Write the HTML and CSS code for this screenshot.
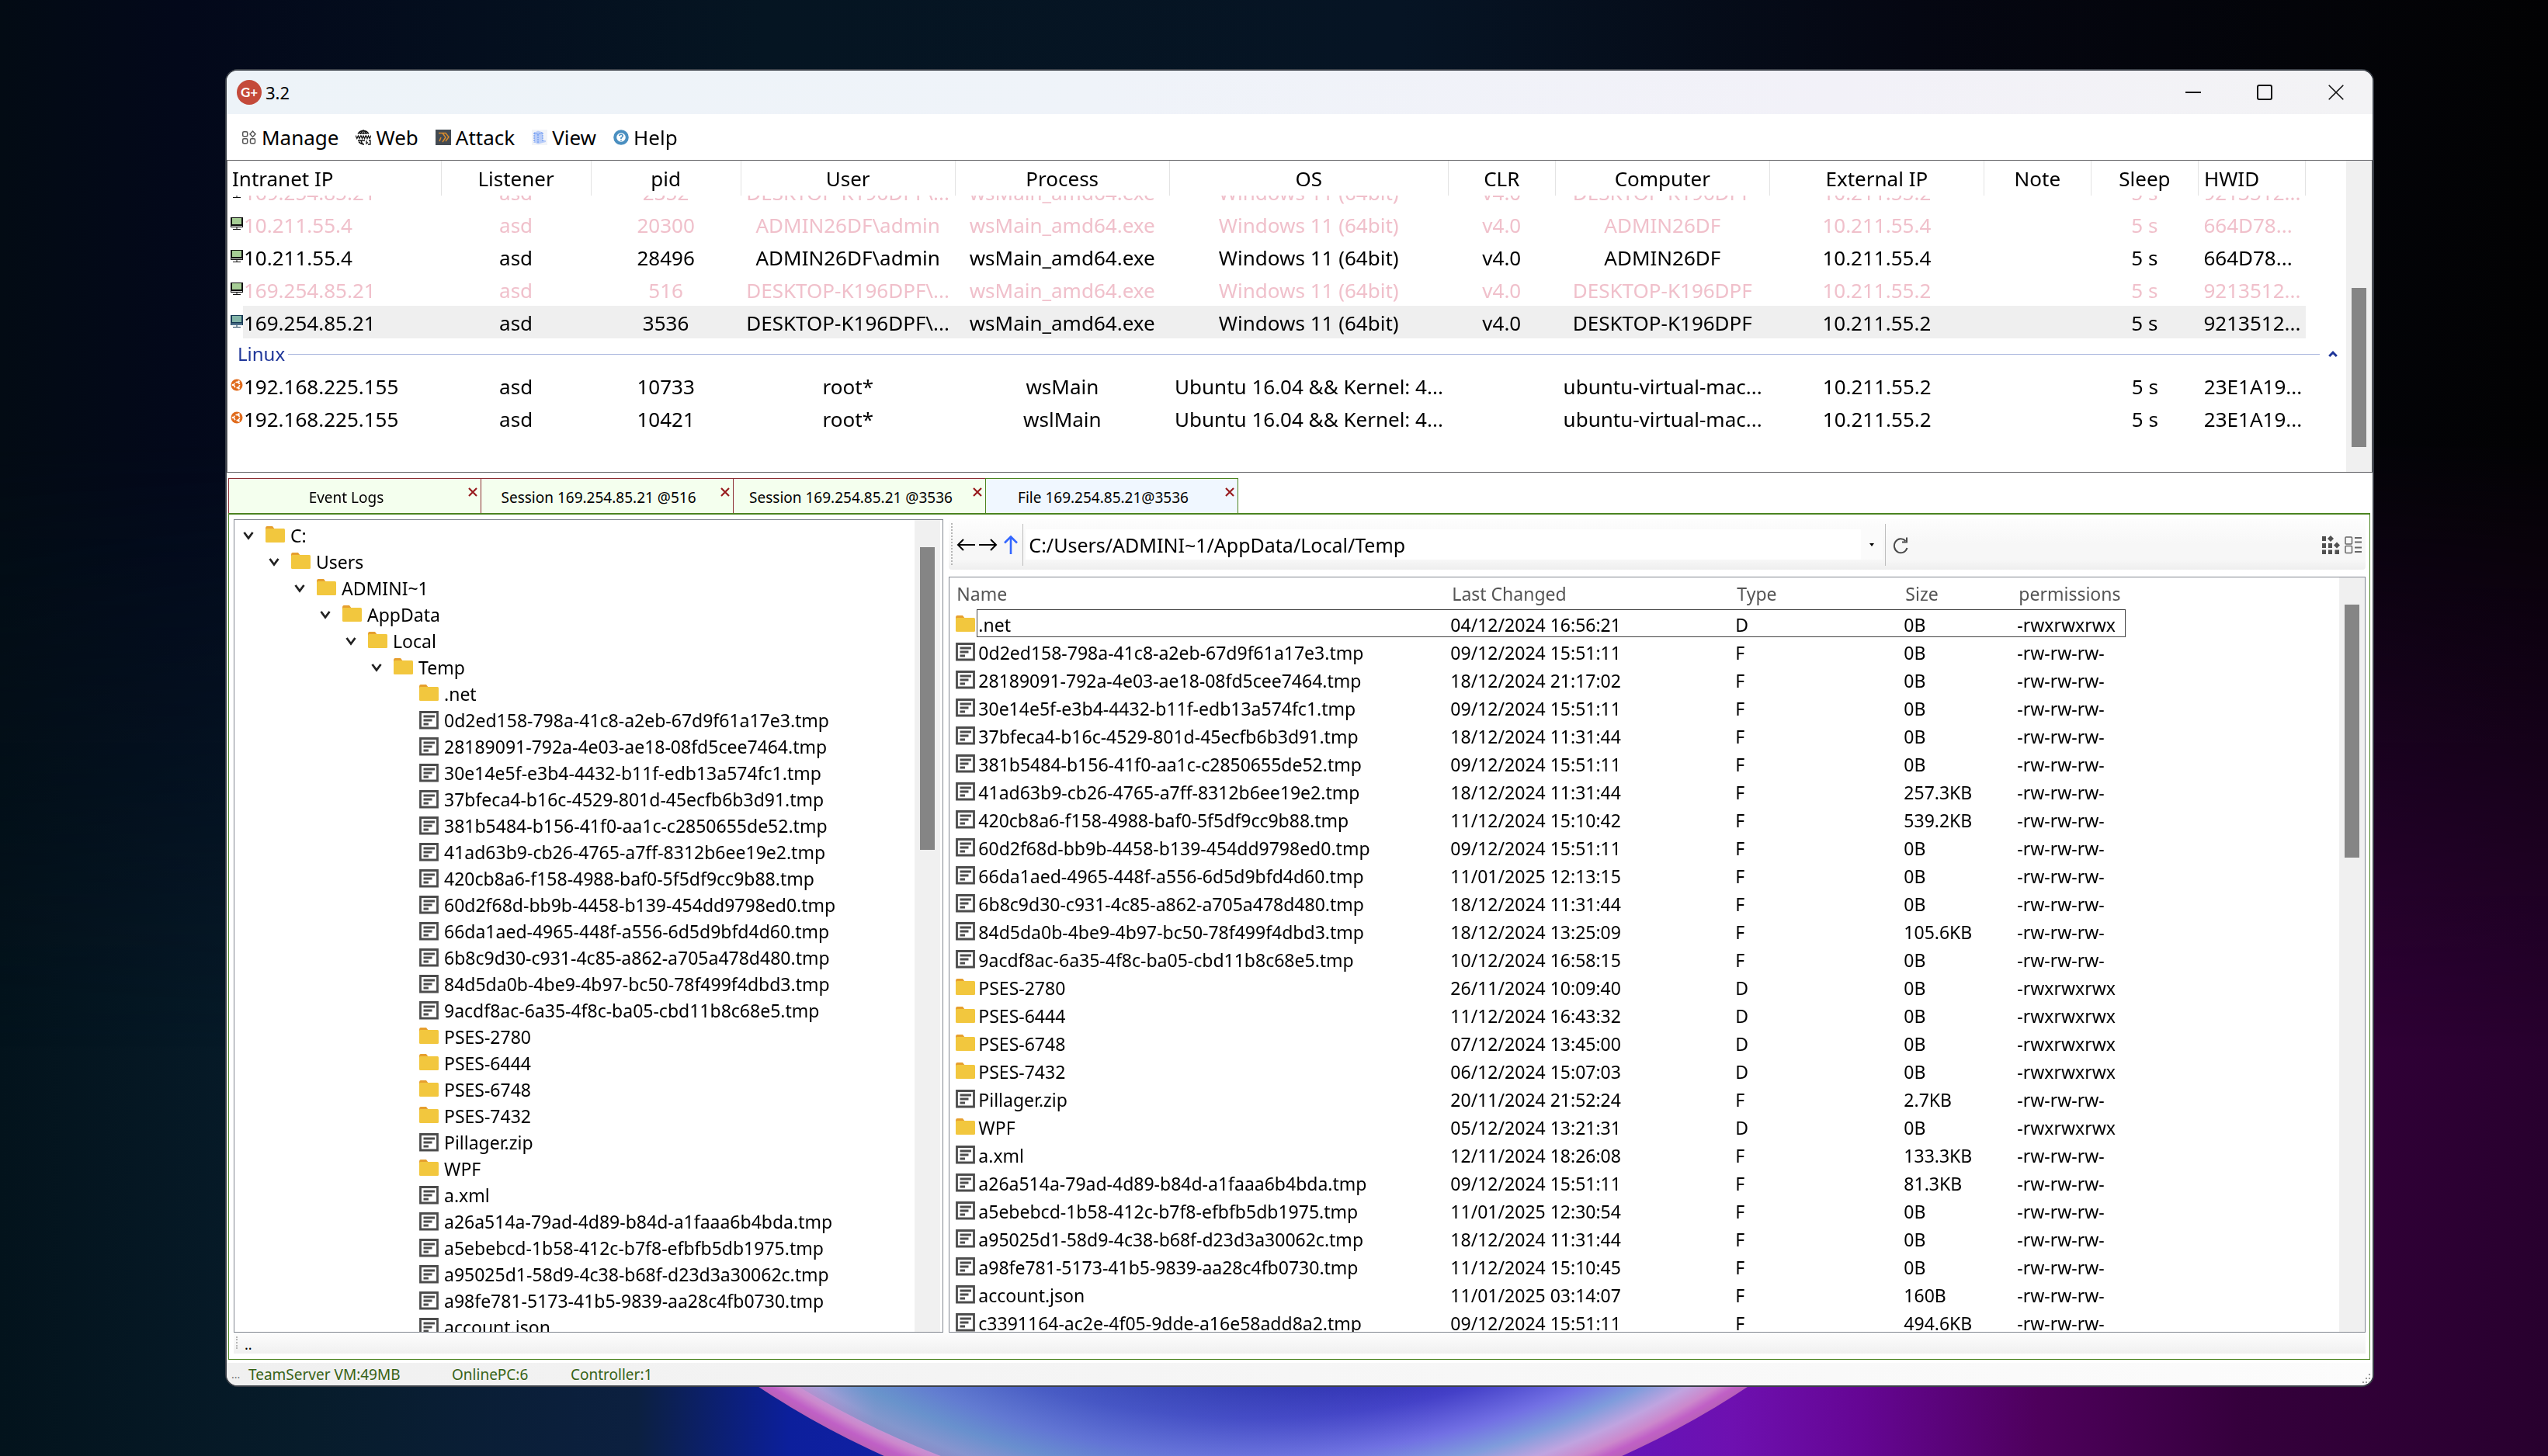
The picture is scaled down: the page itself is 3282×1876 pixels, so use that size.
FILE: index.html
```html
<!DOCTYPE html>
<html lang="en">
<head>
<meta charset="utf-8">
<title>3.2</title>
<link rel="stylesheet" href="styles.css">
</head>
<body>
<svg class="wallpaper" viewBox="0 0 3282 1876" preserveAspectRatio="xMidYMax slice" aria-hidden="true">
  <defs>
    <linearGradient id="night" x1="0" x2="1" y1="0" y2="0">
      <stop offset="0" stop-color="#03131c"/><stop offset=".12" stop-color="#071c2b"/><stop offset=".25" stop-color="#0c2040"/>
      <stop offset=".31" stop-color="#0c1f9c"/><stop offset=".4" stop-color="#1a22b0"/><stop offset=".6" stop-color="#5c18c0"/>
      <stop offset=".68" stop-color="#6e10b0"/><stop offset=".73" stop-color="#650694"/><stop offset=".8" stop-color="#4e005c"/>
      <stop offset=".88" stop-color="#35003c"/><stop offset="1" stop-color="#28002e"/>
    </linearGradient>
    <linearGradient id="top" x1="0" x2="1" y1="0" y2="0">
      <stop offset="0" stop-color="#030b14"/><stop offset=".07" stop-color="#03081a"/><stop offset=".3" stop-color="#051522"/>
      <stop offset=".55" stop-color="#061424"/><stop offset=".75" stop-color="#050712"/><stop offset="1" stop-color="#020203"/>
    </linearGradient>
    <linearGradient id="fade" x1="0" x2="0" y1="0" y2="1">
      <stop offset="0" stop-color="#fff"/><stop offset=".3" stop-color="#fff"/><stop offset=".72" stop-color="#000"/>
    </linearGradient>
    <mask id="fadeMask"><rect width="3282" height="1876" fill="url(#fade)"/></mask>
    <radialGradient id="orb" gradientUnits="userSpaceOnUse" cx="1614" cy="820" r="1158">
      <stop offset=".83" stop-color="#2c2aae"/><stop offset=".87" stop-color="#4440c8"/><stop offset=".912" stop-color="#7270e4"/>
      <stop offset=".94" stop-color="#7f9cdc"/><stop offset=".965" stop-color="#c0a4e0"/><stop offset=".982" stop-color="#cc88cc"/>
      <stop offset=".992" stop-color="#c060c6"/><stop offset="1" stop-color="#b860b8"/>
    </radialGradient>
    <linearGradient id="teal" x1="0" x2="1" y1="0" y2="0">
      <stop offset="0" stop-color="#5a8fc0" stop-opacity="0"/><stop offset=".15" stop-color="#5a8fc0" stop-opacity=".6"/>
      <stop offset=".5" stop-color="#4a78c0" stop-opacity=".4"/><stop offset="1" stop-color="#4a78c0" stop-opacity="0"/>
    </linearGradient>
    <clipPath id="below"><rect y="1700" width="3282" height="176"/></clipPath>
    <clipPath id="inOrb"><circle cx="1614" cy="820" r="1130"/></clipPath>
  </defs>
  <rect width="3282" height="1876" fill="url(#night)"/>
  <rect width="3282" height="1876" fill="url(#top)" mask="url(#fadeMask)"/>
  <g clip-path="url(#below)">
    <circle cx="1614" cy="820" r="1158" fill="url(#orb)"/>
    <rect x="1000" y="1700" width="850" height="176" fill="url(#teal)" clip-path="url(#inOrb)"/>
  </g>
</svg>

<svg class="sprite" aria-hidden="true">
  <symbol id="i-close" viewBox="0 0 20 20"><path d="M.7.7 19.3 19.3M19.3.7.7 19.3" fill="none" stroke="#111" stroke-width="1.6"/></symbol>
  <symbol id="i-x" viewBox="0 0 12 12"><path d="M1 1 11 11M11 1 1 11" fill="none" stroke="#981b1e" stroke-width="2.2"/></symbol>
  <symbol id="i-chev" viewBox="0 0 14 14"><path d="M1.5 3 7 10.5 12.5 3" fill="none" stroke="#222" stroke-width="2.8"/></symbol>
</svg>

<main class="window">
  <header class="titlebar">
    <span class="logo">G+</span>
    <h1 class="title">3.2</h1>
    <button class="win-btn" aria-label="Minimize"><svg viewBox="0 0 20 20"><path d="M0 10H20" stroke="#111" stroke-width="2"/></svg></button>
    <button class="win-btn" aria-label="Maximize"><svg viewBox="0 0 20 20"><rect x="1" y="1" width="18" height="18" rx="2" fill="none" stroke="#111" stroke-width="2"/></svg></button>
    <button class="win-btn" aria-label="Close"><svg><use href="#i-close"/></svg></button>
  </header>

  <nav class="menubar">
    <button class="menu"><svg viewBox="0 0 20 20"><g fill="none" stroke="#555" stroke-width="1.5"><rect x="1.7" y="2.7" width="6" height="6" rx="1.5"/><path d="M14.5 2 18 5.7 14.5 9.4 11 5.7z"/><rect x="1.7" y="11.7" width="6" height="6" rx="1.5"/><rect x="11.5" y="11.7" width="6" height="6" rx="1.5"/></g></svg>Manage</button>
    <button class="menu"><svg viewBox="0 0 20 20"><g fill="none" stroke="#111" stroke-width="1.3"><path d="M3 5.5A8 8 0 0 1 17 5.5M3.5 4.5H16.5M10 .5V6M6.5 6Q7 2 10 .8 13 2 13.500 6"/><path d="M0 7.5 1.8 11.5 3.4 8 5 11.5 6.7 7.5M7 7.5 8.5 11.5 10 8 11.6 11.5 13.2 7.5M13.5 7.5 15 11.5 16.6 8 18.2 11.5 20 7.5"/><path d="M3 14H12M4 15.5Q7 19 11 19M7 14Q8 18 10 19M14 14V18L16 16.5M17 14H19V19H16"/></g></svg>Web</button>
    <button class="menu"><svg viewBox="0 0 20 20"><rect width="20" height="20" fill="#434a52"/><path d="M4 4.5H9L13 10 9 16M8.5 4.5H13L17 9.5 13 15M7 10 5 15" fill="none" stroke="#d98b2b" stroke-width="1.5"/></svg>Attack</button>
    <button class="menu"><svg viewBox="0 0 20 20"><rect width="20" height="20" fill="#f2f4f8"/><path d="M3 4 8 1.5 14 3.5V13L18 14V16L8 18.5 3 16.5z" fill="#b9cdf8"/><path d="M3 4 8 6 14 3.5M8 6V18M3 4V16.5M14 4V16" fill="none" stroke="#5b8def" stroke-dasharray="2 1"/></svg>View</button>
    <button class="menu"><svg viewBox="0 0 20 20"><circle cx="10" cy="10" r="7.8" fill="#fff" stroke="#4a8fc0" stroke-width="4"/><path d="M7.800 8.2Q8 6.2 10 6.2T12.2 8.2Q12.2 9.4 10 10.4V12M10 13V14.5" fill="none" stroke="#4a8fc0" stroke-width="1.6"/></svg>Help</button>
  </nav>

  <section class="sessions">
    <table class="hosts">
      <colgroup><col class="w-ip"><col class="w-lis"><col class="w-lis"><col class="w-l"><col class="w-l"><col class="w-os"><col class="w-s"><col class="w-l"><col class="w-l"><col class="w-s"><col class="w-s"><col class="w-s"></colgroup>
      <thead><tr><th>Intranet IP</th><th>Listener</th><th>pid</th><th>User</th><th>Process</th><th>OS</th><th>CLR</th><th>Computer</th><th>External IP</th><th>Note</th><th>Sleep</th><th>HWID</th></tr></thead>
      <tbody>
        <tr class="off peek"><td class="win"><span>169.254.85.21</span></td><td><span>asd</span></td><td><span>2352</span></td><td><span>DESKTOP-K196DPF\...</span></td><td><span>wsMain_amd64.exe</span></td><td><span>Windows 11 (64bit)</span></td><td><span>v4.0</span></td><td><span>DESKTOP-K196DPF</span></td><td><span>10.211.55.2</span></td><td></td><td><span>5 s</span></td><td><span>9213512...</span></td></tr>
        <tr class="off"><td class="win">10.211.55.4</td><td>asd</td><td>20300</td><td>ADMIN26DF\admin</td><td>wsMain_amd64.exe</td><td>Windows 11 (64bit)</td><td>v4.0</td><td>ADMIN26DF</td><td>10.211.55.4</td><td></td><td>5 s</td><td>664D78...</td></tr>
        <tr><td class="win">10.211.55.4</td><td>asd</td><td>28496</td><td>ADMIN26DF\admin</td><td>wsMain_amd64.exe</td><td>Windows 11 (64bit)</td><td>v4.0</td><td>ADMIN26DF</td><td>10.211.55.4</td><td></td><td>5 s</td><td>664D78...</td></tr>
        <tr class="off"><td class="win">169.254.85.21</td><td>asd</td><td>516</td><td>DESKTOP-K196DPF\...</td><td>wsMain_amd64.exe</td><td>Windows 11 (64bit)</td><td>v4.0</td><td>DESKTOP-K196DPF</td><td>10.211.55.2</td><td></td><td>5 s</td><td>9213512...</td></tr>
        <tr class="sel"><td class="win">169.254.85.21</td><td>asd</td><td>3536</td><td>DESKTOP-K196DPF\...</td><td>wsMain_amd64.exe</td><td>Windows 11 (64bit)</td><td>v4.0</td><td>DESKTOP-K196DPF</td><td>10.211.55.2</td><td></td><td>5 s</td><td>9213512...</td></tr>
      </tbody>
    </table>
    <div class="group"><h2>Linux</h2><hr><button class="fold" aria-label="Collapse Linux"><svg viewBox="0 0 12 10"><path d="M1.2 8 6 3.2 10.8 8" fill="none" stroke="#1f3699" stroke-width="3"/></svg></button></div>
    <table class="hosts">
      <colgroup><col class="w-ip"><col class="w-lis"><col class="w-lis"><col class="w-l"><col class="w-l"><col class="w-os"><col class="w-s"><col class="w-l"><col class="w-l"><col class="w-s"><col class="w-s"><col class="w-s"></colgroup>
      <tbody>
        <tr><td class="nix">192.168.225.155</td><td>asd</td><td>10733</td><td>root*</td><td>wsMain</td><td>Ubuntu 16.04 &amp;&amp; Kernel: 4...</td><td></td><td>ubuntu-virtual-mac...</td><td>10.211.55.2</td><td></td><td>5 s</td><td>23E1A19...</td></tr>
        <tr><td class="nix">192.168.225.155</td><td>asd</td><td>10421</td><td>root*</td><td>wslMain</td><td>Ubuntu 16.04 &amp;&amp; Kernel: 4...</td><td></td><td>ubuntu-virtual-mac...</td><td>10.211.55.2</td><td></td><td>5 s</td><td>23E1A19...</td></tr>
      </tbody>
    </table>
    <div class="scroll"><i class="thumb thumb-top"></i></div>
  </section>

  <nav class="tabs">
    <div class="tab"><button class="tab-name">Event Logs</button><button class="tab-x" aria-label="Close tab"><svg><use href="#i-x"/></svg></button></div>
    <div class="tab"><button class="tab-name">Session 169.254.85.21 @516</button><button class="tab-x" aria-label="Close tab"><svg><use href="#i-x"/></svg></button></div>
    <div class="tab"><button class="tab-name">Session 169.254.85.21 @3536</button><button class="tab-x" aria-label="Close tab"><svg><use href="#i-x"/></svg></button></div>
    <div class="tab on"><button class="tab-name">File 169.254.85.21@3536</button><button class="tab-x" aria-label="Close tab"><svg><use href="#i-x"/></svg></button></div>
  </nav>

  <section class="page">
    <div class="split">
      <div class="tree">
        <ul>
          <li><p class="node dir"><button aria-label="Collapse"><svg><use href="#i-chev"/></svg></button>C:</p><ul>
          <li><p class="node dir"><button aria-label="Collapse"><svg><use href="#i-chev"/></svg></button>Users</p><ul>
          <li><p class="node dir"><button aria-label="Collapse"><svg><use href="#i-chev"/></svg></button>ADMINI~1</p><ul>
          <li><p class="node dir"><button aria-label="Collapse"><svg><use href="#i-chev"/></svg></button>AppData</p><ul>
          <li><p class="node dir"><button aria-label="Collapse"><svg><use href="#i-chev"/></svg></button>Local</p><ul>
          <li><p class="node dir"><button aria-label="Collapse"><svg><use href="#i-chev"/></svg></button>Temp</p><ul>
            <li class="node dir">.net</li>
            <li class="node file">0d2ed158-798a-41c8-a2eb-67d9f61a17e3.tmp</li>
            <li class="node file">28189091-792a-4e03-ae18-08fd5cee7464.tmp</li>
            <li class="node file">30e14e5f-e3b4-4432-b11f-edb13a574fc1.tmp</li>
            <li class="node file">37bfeca4-b16c-4529-801d-45ecfb6b3d91.tmp</li>
            <li class="node file">381b5484-b156-41f0-aa1c-c2850655de52.tmp</li>
            <li class="node file">41ad63b9-cb26-4765-a7ff-8312b6ee19e2.tmp</li>
            <li class="node file">420cb8a6-f158-4988-baf0-5f5df9cc9b88.tmp</li>
            <li class="node file">60d2f68d-bb9b-4458-b139-454dd9798ed0.tmp</li>
            <li class="node file">66da1aed-4965-448f-a556-6d5d9bfd4d60.tmp</li>
            <li class="node file">6b8c9d30-c931-4c85-a862-a705a478d480.tmp</li>
            <li class="node file">84d5da0b-4be9-4b97-bc50-78f499f4dbd3.tmp</li>
            <li class="node file">9acdf8ac-6a35-4f8c-ba05-cbd11b8c68e5.tmp</li>
            <li class="node dir">PSES-2780</li>
            <li class="node dir">PSES-6444</li>
            <li class="node dir">PSES-6748</li>
            <li class="node dir">PSES-7432</li>
            <li class="node file">Pillager.zip</li>
            <li class="node dir">WPF</li>
            <li class="node file">a.xml</li>
            <li class="node file">a26a514a-79ad-4d89-b84d-a1faaa6b4bda.tmp</li>
            <li class="node file">a5ebebcd-1b58-412c-b7f8-efbfb5db1975.tmp</li>
            <li class="node file">a95025d1-58d9-4c38-b68f-d23d3a30062c.tmp</li>
            <li class="node file">a98fe781-5173-41b5-9839-aa28c4fb0730.tmp</li>
            <li class="node file">account.json</li>
          </ul></li></ul></li></ul></li></ul></li></ul></li></ul></li>
        </ul>
        <div class="scroll"><i class="thumb thumb-tree"></i></div>
      </div>

      <div class="browser">
        <div class="toolbar">
          <i class="grip"></i>
          <button class="tool" aria-label="Back"><svg viewBox="0 0 24 24"><path d="M24 12H2M9 5 2 12 9 19" fill="none" stroke="#000" stroke-width="2"/></svg></button>
          <button class="tool" aria-label="Forward"><svg viewBox="0 0 24 24"><path d="M0 12H22M15 5 22 12 15 19" fill="none" stroke="#000" stroke-width="2"/></svg></button>
          <button class="tool" aria-label="Up"><svg viewBox="0 0 24 24"><path d="M12 24V2M4 9.5 12 1.5 20 9.5" fill="none" stroke="#3366ff" stroke-width="2.6"/></svg></button>
          <i class="rule"></i>
          <input class="path" type="text" aria-label="Path" value="C:/Users/ADMINI~1/AppData/Local/Temp">
          <button class="drop" aria-label="Recent paths"><svg viewBox="0 0 6 4"><path d="M0 0H6L3 4z"/></svg></button>
          <i class="rule"></i>
          <button class="tool" aria-label="Refresh"><svg viewBox="0 0 24 24"><path d="M17.5 7A8.5 9 0 1 0 19.5 16M19 2.5V8.5H13" fill="none" stroke="#4a4a4a" stroke-width="2"/></svg></button>
          <span class="space"></span>
          <button class="tool" aria-label="Icon view"><svg viewBox="0 0 24 24"><path d="M1 1H6V7H1zM1 10H6V16H1zM9 10H14V16H9zM1 18.5H6V24H1zM9 18.5H14V24H9zM17.5 18.5H23V24H17.5zM12 0 16 4 12 8 8 4zM20 8.5 24 12.5 20 16.5 16 12.5z" fill="#505050"/></svg></button>
          <button class="tool" aria-label="Details view"><svg viewBox="0 0 24 24"><g fill="none" stroke="#666" stroke-width="1.5"><rect x="2" y="2" width="8.5" height="9" rx="1"/><rect x="2" y="13.5" width="8.5" height="9" rx="1"/><path d="M14 3H23M14 8.5H23M14 15.5H23M14 21H23" stroke-width="2"/></g></svg></button>
        </div>

        <div class="listing">
          <table class="files">
            <colgroup><col class="f-name"><col class="f-date"><col class="f-type"><col class="f-size"><col class="f-perm"></colgroup>
            <thead><tr><th>Name</th><th>Last Changed</th><th>Type</th><th>Size</th><th>permissions</th></tr></thead>
            <tbody>
              <tr class="focus"><td class="dir">.net</td><td>04/12/2024 16:56:21</td><td>D</td><td>0B</td><td>-rwxrwxrwx</td></tr>
              <tr><td class="file">0d2ed158-798a-41c8-a2eb-67d9f61a17e3.tmp</td><td>09/12/2024 15:51:11</td><td>F</td><td>0B</td><td>-rw-rw-rw-</td></tr>
              <tr><td class="file">28189091-792a-4e03-ae18-08fd5cee7464.tmp</td><td>18/12/2024 21:17:02</td><td>F</td><td>0B</td><td>-rw-rw-rw-</td></tr>
              <tr><td class="file">30e14e5f-e3b4-4432-b11f-edb13a574fc1.tmp</td><td>09/12/2024 15:51:11</td><td>F</td><td>0B</td><td>-rw-rw-rw-</td></tr>
              <tr><td class="file">37bfeca4-b16c-4529-801d-45ecfb6b3d91.tmp</td><td>18/12/2024 11:31:44</td><td>F</td><td>0B</td><td>-rw-rw-rw-</td></tr>
              <tr><td class="file">381b5484-b156-41f0-aa1c-c2850655de52.tmp</td><td>09/12/2024 15:51:11</td><td>F</td><td>0B</td><td>-rw-rw-rw-</td></tr>
              <tr><td class="file">41ad63b9-cb26-4765-a7ff-8312b6ee19e2.tmp</td><td>18/12/2024 11:31:44</td><td>F</td><td>257.3KB</td><td>-rw-rw-rw-</td></tr>
              <tr><td class="file">420cb8a6-f158-4988-baf0-5f5df9cc9b88.tmp</td><td>11/12/2024 15:10:42</td><td>F</td><td>539.2KB</td><td>-rw-rw-rw-</td></tr>
              <tr><td class="file">60d2f68d-bb9b-4458-b139-454dd9798ed0.tmp</td><td>09/12/2024 15:51:11</td><td>F</td><td>0B</td><td>-rw-rw-rw-</td></tr>
              <tr><td class="file">66da1aed-4965-448f-a556-6d5d9bfd4d60.tmp</td><td>11/01/2025 12:13:15</td><td>F</td><td>0B</td><td>-rw-rw-rw-</td></tr>
              <tr><td class="file">6b8c9d30-c931-4c85-a862-a705a478d480.tmp</td><td>18/12/2024 11:31:44</td><td>F</td><td>0B</td><td>-rw-rw-rw-</td></tr>
              <tr><td class="file">84d5da0b-4be9-4b97-bc50-78f499f4dbd3.tmp</td><td>18/12/2024 13:25:09</td><td>F</td><td>105.6KB</td><td>-rw-rw-rw-</td></tr>
              <tr><td class="file">9acdf8ac-6a35-4f8c-ba05-cbd11b8c68e5.tmp</td><td>10/12/2024 16:58:15</td><td>F</td><td>0B</td><td>-rw-rw-rw-</td></tr>
              <tr><td class="dir">PSES-2780</td><td>26/11/2024 10:09:40</td><td>D</td><td>0B</td><td>-rwxrwxrwx</td></tr>
              <tr><td class="dir">PSES-6444</td><td>11/12/2024 16:43:32</td><td>D</td><td>0B</td><td>-rwxrwxrwx</td></tr>
              <tr><td class="dir">PSES-6748</td><td>07/12/2024 13:45:00</td><td>D</td><td>0B</td><td>-rwxrwxrwx</td></tr>
              <tr><td class="dir">PSES-7432</td><td>06/12/2024 15:07:03</td><td>D</td><td>0B</td><td>-rwxrwxrwx</td></tr>
              <tr><td class="file">Pillager.zip</td><td>20/11/2024 21:52:24</td><td>F</td><td>2.7KB</td><td>-rw-rw-rw-</td></tr>
              <tr><td class="dir">WPF</td><td>05/12/2024 13:21:31</td><td>D</td><td>0B</td><td>-rwxrwxrwx</td></tr>
              <tr><td class="file">a.xml</td><td>12/11/2024 18:26:08</td><td>F</td><td>133.3KB</td><td>-rw-rw-rw-</td></tr>
              <tr><td class="file">a26a514a-79ad-4d89-b84d-a1faaa6b4bda.tmp</td><td>09/12/2024 15:51:11</td><td>F</td><td>81.3KB</td><td>-rw-rw-rw-</td></tr>
              <tr><td class="file">a5ebebcd-1b58-412c-b7f8-efbfb5db1975.tmp</td><td>11/01/2025 12:30:54</td><td>F</td><td>0B</td><td>-rw-rw-rw-</td></tr>
              <tr><td class="file">a95025d1-58d9-4c38-b68f-d23d3a30062c.tmp</td><td>18/12/2024 11:31:44</td><td>F</td><td>0B</td><td>-rw-rw-rw-</td></tr>
              <tr><td class="file">a98fe781-5173-41b5-9839-aa28c4fb0730.tmp</td><td>11/12/2024 15:10:45</td><td>F</td><td>0B</td><td>-rw-rw-rw-</td></tr>
              <tr><td class="file">account.json</td><td>11/01/2025 03:14:07</td><td>F</td><td>160B</td><td>-rw-rw-rw-</td></tr>
              <tr><td class="file">c3391164-ac2e-4f05-9dde-a16e58add8a2.tmp</td><td>09/12/2024 15:51:11</td><td>F</td><td>494.6KB</td><td>-rw-rw-rw-</td></tr>
            </tbody>
          </table>
          <div class="scroll"><i class="thumb thumb-files"></i></div>
        </div>
      </div>
    </div>
    <div class="strip"><i class="grip"></i><span>..</span></div>
  </section>

  <footer class="status">
    <span class="dots">...</span><span class="st-a">TeamServer VM:49MB</span><span class="st-b">OnlinePC:6</span><span>Controller:1</span>
    <svg class="resize" viewBox="0 0 10 12"><path d="M8 0h2v2h-2zM4 5h2v2h-2zM8 5h2v2h-2zM0 10h2v2h-2zM4 10h2v2h-2zM8 10h2v2h-2z" fill="#999"/></svg>
  </footer>
</main>
</body>
</html>
```
FILE: styles.css
```css
:root {
  --green: #4b8420;
  --line: #828790;
  --folder: url("data:image/svg+xml,%3Csvg xmlns='http://www.w3.org/2000/svg' viewBox='0 0 26 24'%3E%3Cpath d='M0 4Q0 1 2 1H9L12 5V12H0z' fill='%23e69f2e'/%3E%3Crect y='4' width='25' height='18' rx='1.5' fill='%23f2c73e'/%3E%3C/svg%3E");
  --doc: url("data:image/svg+xml,%3Csvg xmlns='http://www.w3.org/2000/svg' viewBox='0 0 26 24'%3E%3Cpath d='M1.5 1.500H23.5V22H1.500z' fill='%23fff' stroke='%234c4c4c' stroke-width='2.8'/%3E%3Cpath d='M5.500 7H20M5.500 12H16.500M5.500 17H12' stroke='%234c4c4c' stroke-width='2.800'/%3E%3C/svg%3E");
  --pc: url("data:image/svg+xml,%3Csvg xmlns='http://www.w3.org/2000/svg' viewBox='0 0 16 16'%3E%3Cpath d='M0 0H16V13H0z' fill='%23111'/%3E%3Cpath d='M2 1H14V9H2z' fill='%23a6cd95'/%3E%3Cpath d='M1 11H15V12H1z' fill='%23ddd'/%3E%3Cpath d='M8 13V15M3 15.500H13' stroke='%23111'/%3E%3C/svg%3E");
  --pc-sel: url("data:image/svg+xml,%3Csvg xmlns='http://www.w3.org/2000/svg' viewBox='0 0 16 16'%3E%3Cpath d='M0 0H16V13H0z' fill='%23173a55'/%3E%3Cpath d='M2 1H14V9H2z' fill='%2383b5a8'/%3E%3Cpath d='M1 11H15V12H1z' fill='%23a8c8e0'/%3E%3Cpath d='M8 13V15M3 15.500H13' stroke='%23173a55'/%3E%3C/svg%3E");
  --ubuntu: url("data:image/svg+xml,%3Csvg xmlns='http://www.w3.org/2000/svg' viewBox='0 0 16 16'%3E%3Ccircle cx='8' cy='8' r='7.500' fill='%23e06a1b'/%3E%3Ccircle cx='8' cy='8' r='3.600' fill='none' stroke='%23fff' stroke-width='1.600' stroke-dasharray='6 1.500'/%3E%3Ccircle cx='3' cy='8' r='1.300' fill='%23fff'/%3E%3Ccircle cx='10.500' cy='3.600' r='1.300' fill='%23fff'/%3E%3Ccircle cx='10.500' cy='12.400' r='1.300' fill='%23fff'/%3E%3C/svg%3E");
}

* { box-sizing: border-box; }

body {
  margin: 0;
  height: 100vh;
  padding: 89px 224px 89px 290px;
  background: #03131c;
  color: #000;
  font: 23px/34px "Noto Sans", "Open Sans", sans-serif;
  overflow: hidden;
}

button, input { font: inherit; color: inherit; border: 0; padding: 0; background: none; }
button { display: flex; align-items: center; justify-content: center; }
h1, h2, p, ul { margin: 0; padding: 0; font-weight: 400; }
ul { list-style: none; }

.wallpaper { position: fixed; inset: 0; width: 100%; height: 100%; z-index: -1; }
.sprite { display: none; }

.window {
  display: flex;
  flex-direction: column;
  height: 100%;
  border: 2px solid #3b4048;
  border-radius: 16px;
  background: #fff;
  overflow: hidden;
}

.titlebar {
  display: flex;
  align-items: center;
  flex: none;
  height: 56px;
  padding: 0 24px 0 13px;
  background: linear-gradient(90deg, #edf3f8, #eff3f9 40%, #f2f1f8 75%, #f3f3f5);
}
.logo {
  width: 32px;
  height: 32px;
  margin-right: 5px;
  border-radius: 50%;
  background: #c44a3a;
  color: #fff;
  font: 700 17px/32px Lato, sans-serif;
  text-align: center;
}
.title { margin-right: auto; font-size: 22px; }
.win-btn { width: 92px; height: 56px; }
.win-btn:last-child { width: 46px; margin-left: 23px; }
.win-btn svg { width: 20px; height: 20px; }

.menubar {
  display: flex;
  align-items: center;
  gap: 22px;
  flex: none;
  height: 59px;
  padding-left: 19px;
  font-size: 26px;
}
.menu { gap: 6px; }
.menu svg { width: 20px; height: 20px; }

.sessions {
  position: relative;
  flex: none;
  height: 403px;
  border: 1px solid #5f5f63;
  overflow: hidden;
  font-size: 26px;
}
.hosts { table-layout: fixed; width: 2677px; border-collapse: collapse; line-height: 40px; }
.w-ip { width: 275px; }
.w-lis { width: 193px; }
.w-l { width: 276px; }
.w-os { width: 359px; }
.w-s { width: 138px; }
.hosts th, .hosts td { padding: 0; font-weight: 400; text-align: center; white-space: nowrap; }
.hosts td { padding-top: 2px; }
.hosts th { height: 45px; padding-top: 2px; line-height: 43px; border-right: 1px solid #e3e3e3; }
.hosts th:first-child { padding-left: 6px; text-align: left; }
.hosts td:first-child { padding-left: 21px; text-align: left; }
.hosts th:last-child, .hosts td:last-child { padding-left: 7px; text-align: left; }
.win { background: var(--pc) 4px 12px / 16px 16px no-repeat; }
.nix { background: var(--ubuntu) 4px 12px / 16px 16px no-repeat; }
.off { color: #f0c0cb; }
.hosts .peek td { padding-top: 0; }
.peek span { display: flex; align-items: flex-end; justify-content: center; height: 16px; overflow: hidden; }
.peek td:first-child span, .peek td:last-child span { justify-content: flex-start; }
.peek .win { background-position: 4px -13px; }
.sel td { background-color: #efefef; }
.sel .win { background: var(--pc-sel) 4px 12px / 16px 16px no-repeat, linear-gradient(#efefef, #efefef) 20px 0 no-repeat; }
.group { display: flex; align-items: center; height: 40px; padding: 0 44px 0 13px; }
.group h2 { font-size: 24px; color: #1f3699; }
.group hr { flex: 1; height: 1px; margin: 0 11px 0 4px; border: 0; background: #a9b5dd; }
.fold svg { width: 12px; height: 10px; }

.scroll { position: absolute; top: 0; right: 0; bottom: 0; width: 33px; background: #f0f0f0; }
.thumb { position: absolute; left: 7px; width: 19px; background: #858585; }
.thumb-top { top: 41%; height: 51%; }
.thumb-tree { top: 35px; height: 390px; }
.thumb-files { top: 35px; height: 326px; }

.tabs { display: flex; flex: none; margin-top: 7px; padding-left: 2px; }
.tab {
  display: flex;
  width: 325px;
  height: 45px;
  padding: 11px 4px 0 0;
  border: 1px solid #8c2f33;
  border-width: 1px 0 0 1px;
  background: #f4ffee;
  font-size: 19px;
}
.tab-name { flex: 1; height: 26px; padding-right: 6px; }
.tab-x { width: 12px; height: 12px; }
.tab-x svg { width: 12px; height: 12px; }
.tab.on { width: 326px; border-color: var(--green); border-right-width: 1px; background: #f0f7ff; }

.page {
  display: flex;
  flex-direction: column;
  flex: 1;
  min-height: 0;
  margin: 0 3px 4px 2px;
  padding: 6px 5px 7px 6px;
  border: 1px solid var(--green);
  border-top-width: 2px;
}
.split { display: flex; flex: 1; gap: 7px; min-height: 0; }

.tree { position: relative; flex: 1 1 0; border: 1px solid var(--line); padding: 3px 0 0; overflow: hidden; }
.tree ul ul { margin-left: 33px; }
.tree .scroll { right: 3px; }
.node { display: flex; height: 34px; padding-left: 72px; white-space: nowrap; }
.node button { width: 14px; margin: 0 47px 0 -61px; }
.node svg { width: 14px; height: 14px; }
.dir { background: var(--folder) 40px 4px / 26px 24px no-repeat; }
.file { background: var(--doc) 40px 5px / 26px 24px no-repeat; }

.browser { display: flex; flex-direction: column; flex: 2 1 0; gap: 9px; min-height: 0; }
.toolbar {
  display: flex;
  align-items: center;
  flex: none;
  height: 65px;
  padding: 0 4px 0 3px;
  border-radius: 4px;
  background: linear-gradient(#fdfdfd, #f7f7f7 50%, #f7f7f7 80%, #eee);
}
.grip { align-self: stretch; margin: 5px 0 6px; border-left: 2px dotted #b5b5b5; }
.tool { flex: none; width: 24px; height: 24px; margin-left: 5px; }
.tool svg { width: 24px; height: 24px; }
.rule { width: 1px; height: 54px; margin: 0 3px; background: #bdbdbd; }
.path { flex: 0 1 1076px; min-width: 0; height: 39px; padding: 0 4px; background: #fff; font-size: 25px; }
.drop { width: 28px; height: 39px; background: #fbfbfb; }
.drop svg { width: 6px; height: 4px; }
.space { flex: 1; }

.listing { position: relative; flex: 1; min-height: 0; border: 1px solid var(--line); overflow: hidden; }
.files { table-layout: fixed; width: 1515px; border-collapse: collapse; line-height: 32px; }
.f-name { width: 641px; }
.f-date { width: 367px; }
.f-type { width: 217px; }
.f-size { width: 146px; }
.f-perm { width: 144px; }
.files th { height: 41px; padding: 0 0 0 6px; color: #555; font-weight: 400; text-align: left; }
.files th:first-child { padding-left: 9px; }
.files td { height: 36px; padding: 4px 0 0 4px; white-space: nowrap; }
.files td:first-child { padding-left: 37px; background-position: 8px 7px; }
.focus { position: relative; }
.focus::after { content: ""; position: absolute; top: 0; right: 0; bottom: 0; left: 35px; border: 1px solid #444; }

.strip {
  display: flex;
  align-items: flex-end;
  gap: 9px;
  flex: none;
  height: 27px;
  padding-left: 3px;
  background: linear-gradient(#fdfdfd, #f0f0f0);
  font-size: 18px;
}
.strip span { line-height: 24px; }

.status {
  display: flex;
  align-items: center;
  flex: none;
  position: relative;
  height: 29px;
  padding-left: 6px;
  background: linear-gradient(90deg, #f0f0f0, #fcfcfc);
  color: #376215;
  font-size: 19px;
}
.dots { width: 22px; color: #777; font-size: 14px; }
.st-a { width: 262px; }
.st-b { width: 153px; }
.resize { position: absolute; right: 3px; bottom: 3px; width: 10px; height: 12px; }
```
